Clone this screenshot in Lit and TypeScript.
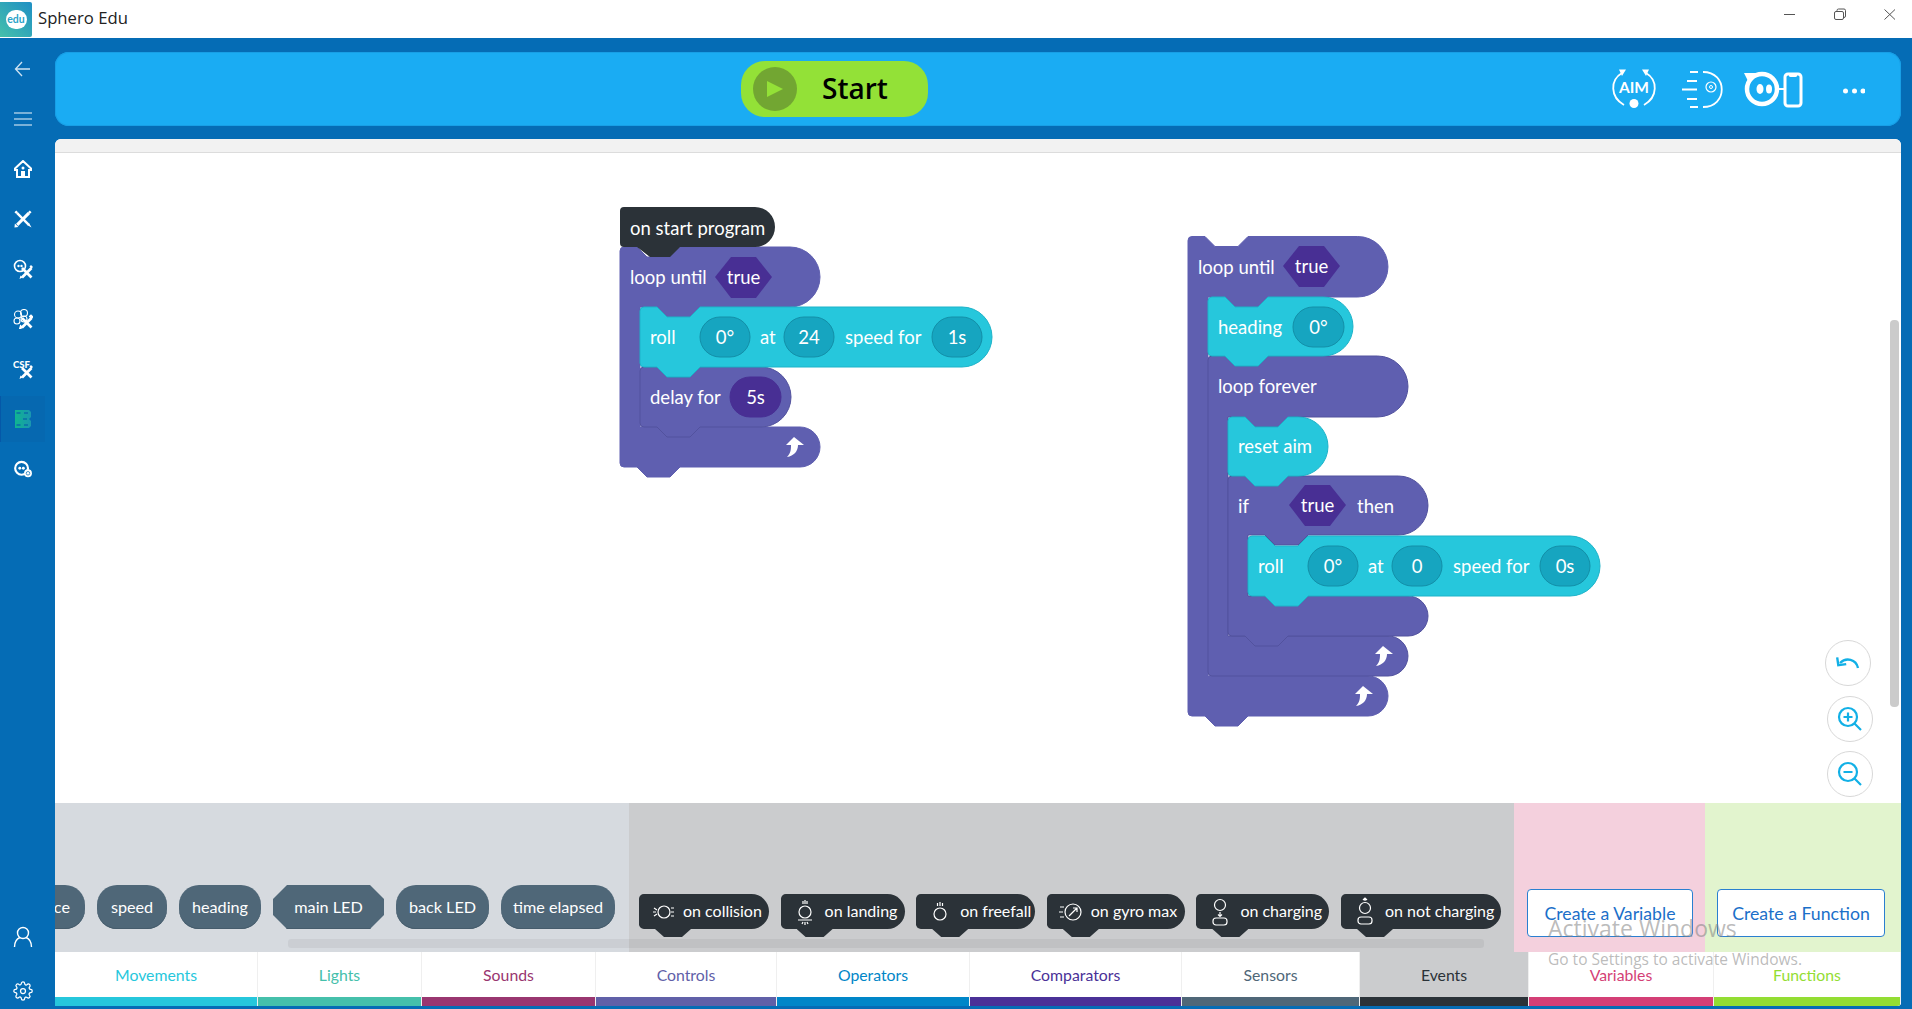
import { LitElement, html, css, svg } from "lit";
import { customElement } from "lit/decorators.js";

const PURPLE = "#5f5fb0", PURPLE_S = "#52529e", CYAN = "#26c7dc", CYAN_S = "#1db3c9", DARK = "#2b3238";
const notchTop = (x: number, y: number) => `H${x + 17} L${x + 27} ${y + 10} H${x + 50} L${x + 60} ${y}`;
const notchBot = (x: number, y: number) => `H${x + 60} L${x + 50} ${y + 10} H${x + 27} L${x + 17} ${y}`;

function blockPath(x: number, y: number, w: number, h: number, top = true) {
  const r = h / 2;
  return `M${x + 4} ${y} ${top ? notchTop(x, y) : ""} H${x + w - r} A${r} ${r} 0 0 1 ${x + w - r} ${y + h} ${notchBot(x, y + h)} H${x + 4} Q${x} ${y + h} ${x} ${y + h - 4} V${y + 4} Q${x} ${y} ${x + 4} ${y} Z`;
}
function cPath(x: number, y: number, w: number, hh: number, footY: number, footH: number, footW = w, notch = true) {
  const r = hh / 2, fr = footH / 2, ix = x + 20, b = footY + footH;
  return `M${x + 4} ${y} ${notchTop(x, y)} H${x + w - r} A${r} ${r} 0 0 1 ${x + w - r} ${y + hh} ${notchBot(ix, y + hh)} H${ix} V${footY} H${x + footW - fr} A${fr} ${fr} 0 0 1 ${x + footW - fr} ${b} ${notch ? notchBot(x, b) : ""} H${x + 4} Q${x} ${b} ${x} ${b - 4} V${y + 4} Q${x} ${y} ${x + 4} ${y} Z`;
}
const shape = (d: string, fill: string, stroke: string) => svg`<path d=${d} fill=${fill} stroke=${stroke} stroke-width="1"></path>`;
const label = (x: number, y: number, t: string) => svg`<text class="bt" x=${x} y=${y}>${t}</text>`;
const pill = (x: number, y: number, w: number, t: string, fill: string, stroke: string) => svg`
  <rect x=${x} y=${y} width=${w} height="40" rx="20" fill=${fill} stroke=${stroke}></rect>
  <text class="bt mid" x=${x + w / 2} y=${y + 20}>${t}</text>`;
const hex = (x: number, y: number, t: string) => svg`
  <path d="M${x} ${y + 20} L${x + 16} ${y} H${x + 41} L${x + 57} ${y + 20} L${x + 41} ${y + 41} H${x + 16} Z" fill="#482f94"></path>
  <text class="bt mid" x=${x + 28.5} y=${y + 20}>${t}</text>`;
const arrow = (x: number, y: number) => svg`<path transform="translate(${x} ${y})" d="M0 0 L10 8 L4 8 C4 14 0 19 -7 20 C-3 16 -3 12 -3 8 L-8 8 Z" fill="#fff"></path>`;
const P1 = "#16a5c0", P1S = "#138fa8", P2 = "#482f94";

const rollBlock = (x: number, y: number, a: string, b: string, c: string) => svg`
  ${shape(blockPath(x, y, 352, 60), CYAN, CYAN_S)}
  ${label(x + 10, y + 30, "roll")}
  ${pill(x + 60, y + 10, 50, a, P1, P1S)}
  ${label(x + 120, y + 30, "at")}
  ${pill(x + 144, y + 10, 50, b, P1, P1S)}
  ${label(x + 205, y + 30, "speed for")}
  ${pill(x + 292, y + 10, 50, c, P1, P1S)}`;

const leftStack = svg`
  ${shape(cPath(620, 247, 200, 60, 427, 40), PURPLE, PURPLE)}
  ${label(630, 277, "loop until")}
  ${hex(715, 257, "true")}
  ${arrow(794, 437)}
  ${shape(blockPath(640, 367, 151, 60), PURPLE, PURPLE_S)}
  ${label(650, 397, "delay for")}
  ${pill(730, 377, 51, "5s", P2, P2)}
  ${rollBlock(640, 307, "0°", "24", "1s")}
  <path d="M624 207 H755 A20 20 0 0 1 755 247 H680 L670 257 H650 L637 247 H624 Q620 247 620 243 V211 Q620 207 624 207 Z" fill=${DARK}></path>
  ${label(630, 228, "on start program")}`;

const rightStack = svg`
  ${shape(cPath(1188, 236.5, 200, 60.5, 676, 40), PURPLE, PURPLE)}
  ${label(1198, 267, "loop until")}
  ${hex(1283, 246, "true")}
  ${arrow(1363, 686)}
  ${shape(cPath(1208, 356, 200, 61, 636, 40, 200, false), PURPLE, PURPLE_S)}
  ${label(1218, 386, "loop forever")}
  ${arrow(1383, 646)}
  ${shape(cPath(1228, 476, 200, 59, 596, 40), PURPLE, PURPLE_S)}
  ${label(1238, 505.5, "if")}
  ${hex(1289, 485, "true")}
  ${label(1357, 505.5, "then")}
  ${rollBlock(1248, 536, "0°", "0", "0s")}
  ${shape(blockPath(1228, 417, 100, 59), CYAN, CYAN_S)}
  ${label(1238, 446, "reset aim")}
  ${shape(blockPath(1208, 297, 145, 59), CYAN, CYAN_S)}
  ${label(1218, 327, "heading")}
  ${pill(1293, 307, 51, "0°", P1, P1S)}`;

const sensorChips = [
  { t: "distance", w: 100, shape: "" },
  { t: "speed", w: 70, shape: "" },
  { t: "heading", w: 82, shape: "" },
  { t: "main LED", w: 111, shape: "oct" },
  { t: "back LED", w: 93, shape: "" },
  { t: "time elapsed", w: 114, shape: "" },
];

const ico = (body: unknown) => html`<svg class="ev-i" width="26" height="30" viewBox="0 0 26 30" fill="none" stroke="#fff" stroke-width="1.2">${body}</svg>`;
const eventChips = [
  { t: "on collision", w: 130, i: ico(svg`<circle cx="14" cy="15" r="6"></circle><path d="M3 15h3M4 11l3 2M4 19l3-2M21 11h3M21 15h3M21 19h3"></path>`) },
  { t: "on landing", w: 124, i: ico(svg`<circle cx="13" cy="15" r="6"></circle><path d="M11 7V4M13 7V3M15 7V4M6 23h14M10 27l1-2M13 28v-3M16 27l-1-2"></path>`) },
  { t: "on freefall", w: 119, i: ico(svg`<circle cx="13" cy="17" r="6"></circle><path d="M10.5 9V6M13 9V5M15.5 9V6"></path>`) },
  { t: "on gyro max", w: 138, i: ico(svg`<circle cx="15" cy="15" r="8"></circle><path d="M11 19l8-8M15 11h4v4M2 10h4M1 15h4M2 20h4"></path>`) },
  { t: "on charging", w: 133, i: ico(svg`<circle cx="13" cy="8" r="5.5"></circle><path d="M13 15v4M11 17.5l2 2 2-2"></path><rect x="6" y="21" width="14" height="7" rx="3"></rect>`) },
  { t: "on not charging", w: 160, i: ico(svg`<circle cx="13" cy="11" r="5.5"></circle><path d="M13 4V1M11 3l2-2 2 2"></path><rect x="6" y="20" width="14" height="7" rx="3"></rect>`) },
];

const tabs = [
  { t: "Movements", w: 203, c: "#26c7dc" },
  { t: "Lights", w: 164, c: "#45c0ab" },
  { t: "Sounds", w: 174, c: "#993670" },
  { t: "Controls", w: 181, c: "#6060a8" },
  { t: "Operators", w: 193, c: "#0086c8" },
  { t: "Comparators", w: 212, c: "#4a3197" },
  { t: "Sensors", w: 178, c: "#4f6778" },
  { t: "Events", w: 169, c: "#2b3238", active: true },
  { t: "Variables", w: 185, c: "#d43f76" },
  { t: "Functions", w: 187, c: "#93dd33" },
];

// Crossed pencil and ruler, spanning a 20-unit box.
const pencilX = svg`
  <path d="M3.500 3.500L16.500 16.500" stroke="#fff" stroke-width="2.600"></path>
  <path d="M16.500 3.500L3.500 16.500" stroke="#fff" stroke-width="3.400"></path>
  <path d="M0.500 2.500L2.500 0.500L4.500 2.500L2.500 4.500ZM15 17L17 15L19.500 19.500ZM15.500 2.500L17.500 0.500L19.500 2.500L17.500 4.500ZM1 15L5 19L0.500 19.500Z" fill="#fff"></path>`;
const smallX = svg`
  <path d="M9 9L18.500 18.500M18.500 9L9 18.500" stroke="#fff" stroke-width="2.800"></path>
  <path d="M16.500 7.500L18 6L20 8L18.500 9.500ZM7.500 16.500L9.500 18.500L6.500 20Z" fill="#fff"></path>`;

@customElement("app-root")
export class AppRoot extends LitElement {
  static styles = css`
    :host { display: block; width: 1912px; height: 1009px; overflow: hidden; background: #056cb5; font-family: "Lato", "Liberation Sans", sans-serif; }
    .titlebar { height: 38px; background: #fff; display: flex; align-items: center; }
    .logo { width: 32px; height: 35px; background: linear-gradient(45deg, #45c0ab, #1f8fc4); border-radius: 0 2px 2px 0; display: flex; align-items: center; justify-content: center; }
    .bubble { width: 21px; height: 19px; background: #fff; border-radius: 10px; color: #2aa4c9; font: 700 10.5px/19px "Lato", sans-serif; text-align: center; }
    .title { margin: 0 0 3px 6px; font: 400 16.7px "Open Sans", sans-serif; color: #222; }
    .winctl { margin-left: auto; display: flex; align-items: center; }
    .winctl svg { display: block; }
    .main { display: flex; height: 971px; }
    .side { width: 55px; display: flex; flex-direction: column; align-items: flex-start; background: #056cb5; }
    .nav { width: 45px; height: 50px; display: flex; align-items: center; justify-content: center; flex: none; }
    .nav.active { background: #0668b0; height: 46px; margin: 2px 0; box-shadow: inset 1px 0 0 #0558a8; }
    .nav svg { display: block; }
    .side-top { padding-top: 6px; }
    .side-bot { margin-top: auto; display: flex; flex-direction: column; gap: 18px; }
    .side-bot .nav { height: 36px; }
    .content { flex: 1; display: flex; flex-direction: column; padding: 14px 11px 3px 0; min-width: 0; }
    .topbar { height: 74px; background: #1aacf3; border-radius: 14px; display: flex; align-items: center; flex: none; padding-left: 686px; box-shadow: inset 0 0 0 1px #189fe6; }
    .start { width: 187px; height: 56px; background: #93e137; border-radius: 24px; display: flex; align-items: center; padding-left: 12px; box-sizing: border-box; }
    .play { width: 44px; height: 44px; border-radius: 50%; background: #72a632; display: flex; align-items: center; justify-content: center; }
    .start span { margin: 0 0 3px 25px; font: 600 28px "Open Sans", sans-serif; color: #000; }
    .tools { margin-left: auto; margin-right: 36px; display: flex; align-items: center; }
    .tools svg { display: block; }
    .canvas { flex: 1; margin-top: 13px; background: #fff; border-radius: 6px 6px 4px 0; overflow: hidden; display: flex; flex-direction: column; min-height: 0; }
    .strip { height: 13px; background: #f2f2f2; border-bottom: 1px solid #dcdcdc; flex: none; }
    .work { position: relative; height: 650px; flex: none; }
    .work > svg.stage { position: absolute; left: 0; top: 0; }
    .bt { font: 400 18.5px "Lato", sans-serif; fill: #fff; dominant-baseline: central; }
    .mid { text-anchor: middle; }
    .vscroll { position: absolute; right: 2px; top: 167px; width: 9px; height: 387px; background: #cbcbcb; border-radius: 4px; }
    .round { position: absolute; width: 44px; height: 44px; border: 1.5px solid #d8d8d8; border-radius: 50%; background: #fff; display: flex; align-items: center; justify-content: center; }
    .round svg { display: block; }
    .r1 { left: 1770px; top: 487px; }
    .r2 { left: 1772px; top: 543px; }
    .r3 { left: 1772px; top: 598px; }
    .palette { height: 149px; flex: none; display: flex; position: relative; overflow: hidden; }
    .sec { height: 100%; flex: none; display: flex; box-sizing: border-box; }
    .sec-sensors { width: 574px; background: #d6dadf; justify-content: flex-end; gap: 12px; padding: 82px 14px 0 0; overflow: hidden; }
    .sec-events { width: 885px; background: #cbccce; gap: 11.6px; padding: 91px 0 0 10px; }
    .sec-var { width: 191px; background: #f4d0dd; padding: 86px 0 0 13px; }
    .sec-fn { width: 196px; background: #e2f4ce; padding: 86px 0 0 12px; }
    .chip { height: 44px; background: #4f6778; border-radius: 20px; color: #fff; font-size: 16.2px; display: flex; align-items: center; justify-content: center; flex: none; box-shadow: inset 0 -1px 0 #465c6c; white-space: nowrap; overflow: hidden; padding-bottom: 2px; box-sizing: border-box; }
    .chip.oct { border-radius: 0; clip-path: polygon(14px 0, calc(100% - 14px) 0, 100% 14px, 100% calc(100% - 14px), calc(100% - 14px) 100%, 14px 100%, 0 calc(100% - 14px), 0 14px); }
    .chip.clip { justify-content: flex-end; padding-right: 15px; }
    .ev { height: 35px; background: #2b3238; border-radius: 5px 18px 18px 5px; color: #fff; font-size: 16px; display: flex; align-items: center; flex: none; position: relative; padding-left: 11px; box-sizing: border-box; white-space: nowrap; }
    .ev span { margin-bottom: 2px; }
    .ev::after { content: ""; position: absolute; left: 16px; top: 35px; width: 36px; height: 8px; background: #2b3238; clip-path: polygon(0 0, 100% 0, 75% 100%, 25% 100%); }
    .ev-i { flex: none; margin-right: 7px; }
    .create { height: 48px; background: #fff; border: 1.5px solid #2a7fd0; border-radius: 4px; color: #1b6fc9; font-size: 17.7px; display: flex; align-items: center; justify-content: center; box-sizing: border-box; flex: none; }
    .create-v { width: 166px; }
    .create-f { width: 168px; }
    .hscroll { position: absolute; left: 233px; top: 136px; width: 1196px; height: 9px; background: rgba(0,0,0,.05); border-radius: 3px; }
    .tabs { display: flex; height: 54px; flex: none; }
    .tab { flex: none; display: flex; flex-direction: column; box-sizing: border-box; border-right: 1px solid #efefef; background: #fff; }
    .tab.active { background: #cbccce; }
    .tab-t { flex: 1; display: flex; align-items: center; justify-content: center; font-size: 15.8px; font-weight: 400; }
    .tab-b { height: 9px; }
    .wm { position: absolute; left: 1548px; top: 912px; color: rgba(130,130,130,.55); font-family: "Open Sans", sans-serif; pointer-events: none; white-space: nowrap; }
    .wm1 { font-size: 23px; line-height: 32px; }
    .wm2 { font-size: 15.5px; line-height: 22px; margin-top: 4px; }
    .page { position: relative; }
  `;

  render() {
    return html`<div class="page">
      <div class="titlebar">
        <div class="logo"><div class="bubble">edu</div></div>
        <div class="title">Sphero Edu</div>
        <div class="winctl">
          <svg width="128" height="38" viewBox="1784 0 128 38" fill="none" stroke="#555" stroke-width="1">
            <path d="M1784 14.5H1795"></path>
            <rect x="1834.5" y="11.5" width="9" height="8" rx="1.5"></rect>
            <path d="M1837 11V10.5a1.5 1.5 0 0 1 1.5-1.5H1844a1.5 1.5 0 0 1 1.5 1.5V16a1.5 1.5 0 0 1-1.5 1.5"></path>
            <path d="M1884.5 9.5L1895 19.5M1895 9.5L1884.5 19.5"></path>
          </svg>
        </div>
      </div>
      <div class="main">
        <div class="side">
          <div class="side-top">
            <div class="nav"><svg width="20" height="16" viewBox="0 0 20 16" fill="none" stroke="#cfe3f2" stroke-width="1.3"><path d="M17 8H3M9 1L2.5 8 9 15"></path></svg></div>
            <div class="nav"><svg width="20" height="14" viewBox="0 0 20 14" fill="none" stroke="#f0f6fb" stroke-width="1.2"><path d="M1 1h18M1 7h18M1 13h18"></path></svg></div>
            <div class="nav"><svg width="18" height="18" viewBox="0 0 18 18"><path d="M9 1L1 8.5V10H3V17H15V10H17V8.5Z" fill="none" stroke="#fff" stroke-width="2"></path><circle cx="9" cy="8" r="1.5" fill="#fff"></circle><rect x="7" y="11" width="4" height="6" fill="#fff"></rect></svg></div>
            <div class="nav"><svg width="18" height="18" viewBox="0 0 20 20">${pencilX}</svg></div>
            <div class="nav"><svg width="20" height="20" viewBox="0 0 20 20"><circle cx="7" cy="7" r="5.500" fill="none" stroke="#fff" stroke-width="1.600"></circle><circle cx="5.500" cy="7" r="1.200" fill="#fff"></circle><circle cx="8.500" cy="7" r="1.200" fill="#fff"></circle>${smallX}</svg></div>
            <div class="nav"><svg width="20" height="20" viewBox="0 0 20 20" fill="none" stroke="#fff" stroke-width="1.100"><circle cx="5" cy="5.500" r="3.500"></circle><circle cx="11" cy="4" r="3.500"></circle><circle cx="4" cy="12" r="3"></circle><circle cx="11" cy="10" r="3"></circle>${smallX}</svg></div>
            <div class="nav"><svg width="20" height="20" viewBox="0 0 20 20"><text x="0" y="8.500" font-family="Lato, sans-serif" font-weight="900" font-size="9.500" fill="#fff">CSF</text>${smallX}</svg></div>
            <div class="nav active"><svg width="16" height="18" viewBox="0 0 16 18"><defs><linearGradient id="g" x1="0" x2="1" y1="0" y2="0"><stop offset="0" stop-color="#10b590"></stop><stop offset="1" stop-color="#1a96b0"></stop></linearGradient></defs><path d="M0 0H14L16 2V7L14 9L16 11V16L14 18H0Z" fill="url(#g)"></path><path d="M1.500 3h4M1.500 15h4M9 3h4M9 15h4M8 9h4" stroke="#0a6ea8" stroke-width="1.500"></path></svg></div>
            <div class="nav"><svg width="20" height="20" viewBox="0 0 28 28"><circle cx="12" cy="13" r="9" fill="none" stroke="#fff" stroke-width="3"></circle><circle cx="9.500" cy="13" r="2" fill="#fff"></circle><circle cx="14.500" cy="13" r="2" fill="#fff"></circle><circle cx="21" cy="20" r="5.500" fill="#fff"></circle><circle cx="21" cy="20" r="2.500" fill="none" stroke="#056cb5"></circle></svg></div>
          </div>
          <div class="side-bot">
            <div class="nav"><svg width="20" height="22" viewBox="0 0 20 22" fill="none" stroke="#fff" stroke-width="1.4"><circle cx="10" cy="7" r="5.500"></circle><path d="M1.500 21c0-6 3-8.500 5.500-9.500M18.500 21c0-6-3-8.500-5.500-9.500"></path></svg></div>
            <div class="nav"><svg width="20" height="20" viewBox="0 0 24 24" fill="none" stroke="#fff" stroke-width="1.5"><circle cx="12" cy="12" r="3"></circle><path d="M19.400 15a1.700 1.700 0 0 0 .3 1.800l.1.1a2 2 0 1 1-2.900 2.900l-.1-.1a1.700 1.700 0 0 0-2.800 1.200V21a2 2 0 0 1-4 0v-.1a1.700 1.700 0 0 0-2.900-1.200l-.1.1a2 2 0 1 1-2.900-2.900l.1-.1a1.700 1.700 0 0 0-1.200-2.800H3a2 2 0 0 1 0-4h.1a1.700 1.700 0 0 0 1.200-2.900l-.1-.1a2 2 0 1 1 2.900-2.900l.1.1a1.700 1.700 0 0 0 2.800-1.200V3a2 2 0 0 1 4 0v.1a1.700 1.700 0 0 0 2.900 1.200l.1-.1a2 2 0 1 1 2.900 2.900l-.1.1a1.700 1.700 0 0 0 1.200 2.800h.1a2 2 0 0 1 0 4h-.1a1.700 1.700 0 0 0-1.500 1z"></path></svg></div>
          </div>
        </div>
        <div class="content">
          <div class="topbar">
            <div class="start">
              <div class="play"><svg width="16" height="16" viewBox="0 0 16 16"><path d="M0 0L16 8L0 16Z" fill="#93e137"></path></svg></div>
              <span>Start</span>
            </div>
            <div class="tools">
              <svg width="256" height="46" viewBox="1609 66 256 46" fill="none" stroke="#fff">
                <path d="M1622 73C1610 80 1610 97 1624 105M1646 73C1658 80 1658 97 1644 105" stroke-width="1.800"></path>
                <path d="M1619 69.500H1626L1622 76ZM1642 69.500H1649L1646 76Z" fill="#fff" stroke="none"></path>
                <text x="1634" y="92.500" text-anchor="middle" font-family="Lato, sans-serif" font-weight="700" font-size="15.500" fill="#fff" stroke="none">AIM</text>
                <circle cx="1634" cy="103.500" r="4.500" fill="#fff" stroke="none"></circle>
                <path d="M1690 72H1698M1687 81H1697M1682 89.500H1697M1687 99H1697M1690 107H1698M1703 72C1728 72 1728 107 1703 107" stroke-width="1.800"></path>
                <circle cx="1711" cy="87" r="5" stroke-width="1.200"></circle>
                <circle cx="1711" cy="87" r="1.500" stroke-width="1"></circle>
                <circle cx="1762" cy="89" r="15" stroke-width="4.500"></circle>
                <path d="M1744 73H1758L1748 81Z" fill="#fff" stroke="none"></path>
                <ellipse cx="1760" cy="89" rx="3.500" ry="5" fill="#fff" stroke="none"></ellipse>
                <ellipse cx="1769" cy="89" rx="3" ry="4.500" fill="#fff" stroke="none"></ellipse>
                <path d="M1778 89H1784" stroke-width="2"></path>
                <rect x="1785" y="74" width="16" height="32" rx="3" stroke-width="3"></rect>
                <path d="M1789 74h8v1.500a1.500 1.500 0 0 1-1.500 1.500h-5a1.500 1.500 0 0 1-1.500-1.500z" fill="#fff" stroke="none"></path>
                <circle cx="1845.500" cy="91" r="2.500" fill="#fff" stroke="none"></circle>
                <circle cx="1854.500" cy="91" r="2.500" fill="#fff" stroke="none"></circle>
                <circle cx="1863" cy="91" r="2.500" fill="#fff" stroke="none"></circle>
              </svg>
            </div>
          </div>
          <div class="canvas">
            <div class="strip"></div>
            <div class="work">
              <svg class="stage" width="1846" height="650" viewBox="55 153 1846 650">${leftStack}${rightStack}</svg>
              <div class="vscroll"></div>
              <div class="round r1"><svg width="24" height="18" viewBox="0 0 24 18" fill="none" stroke="#12b0e6" stroke-width="2.400"><path d="M22 14C20 5 10 3 4 9"></path><path d="M2 3V11H10" transform="rotate(-8 4 9)"></path></svg></div>
              <div class="round r2"><svg width="26" height="26" viewBox="0 0 26 26" fill="none" stroke="#12b0e6" stroke-width="2.200"><circle cx="11" cy="11" r="9"></circle><path d="M17.500 17.500L24 24M11 6.500V15.500M6.500 11H15.500"></path></svg></div>
              <div class="round r3"><svg width="26" height="26" viewBox="0 0 26 26" fill="none" stroke="#12b0e6" stroke-width="2.200"><circle cx="11" cy="11" r="9"></circle><path d="M17.500 17.500L24 24M6.500 11H15.500"></path></svg></div>
            </div>
            <div class="palette">
              <div class="sec sec-sensors">
                ${sensorChips.map((c, i) => html`<div class="chip ${c.shape} ${i === 0 ? "clip" : ""}" style="width:${c.w}px">${c.t}</div>`)}
              </div>
              <div class="sec sec-events">
                ${eventChips.map((c) => html`<div class="ev" style="width:${c.w}px">${c.i}<span>${c.t}</span></div>`)}
              </div>
              <div class="sec sec-var"><div class="create create-v">Create a Variable</div></div>
              <div class="sec sec-fn"><div class="create create-f">Create a Function</div></div>
              <div class="hscroll"></div>
            </div>
            <div class="tabs">
              ${tabs.map((t) => html`<div class="tab ${t.active ? "active" : ""}" style="width:${t.w}px">
                <div class="tab-t" style="color:${t.c}">${t.t}</div>
                <div class="tab-b" style="background:${t.c}"></div>
              </div>`)}
            </div>
          </div>
        </div>
      </div>
      <div class="wm">
        <div class="wm1">Activate Windows</div>
        <div class="wm2">Go to Settings to activate Windows.</div>
      </div>
    </div>`;
  }
}
